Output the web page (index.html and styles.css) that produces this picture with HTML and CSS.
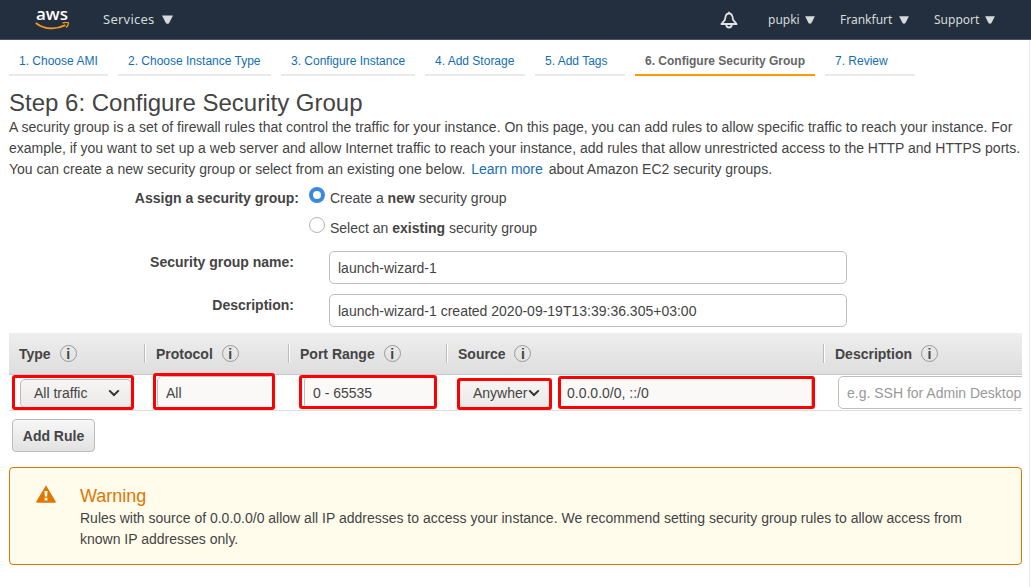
FILE: index.html
```html
<!DOCTYPE html>
<html lang="en">
<head>
<meta charset="utf-8">
<title>Configure Security Group</title>
<link rel="stylesheet" href="styles.css">
</head>
<body>
<header class="topbar">
  <a class="logo"><span class="logo-text">aws</span>
    <svg class="smile" width="35" height="8" viewBox="0 0 35 8"><path d="M0.8 .9C9 7.3 20 8 30.5 3.1" fill="none" stroke="#f7981f" stroke-width="1.9"/><path d="M27.6 1.1C30 .3 33.2 0 33.3 .7S32.8 4 31.2 5.6" fill="none" stroke="#f7981f" stroke-width="1.4"/></svg>
  </a>
  <a class="nav services">Services<svg class="caret" width="11" height="9" viewBox="0 0 11 9"><path d="M0 0.4H11L7 8.2Q5.5 9.2 4 8.2Z"/></svg></a>
  <svg class="bell" width="18" height="18" viewBox="0 0 18 18" fill="none" stroke="#e1e4e5" stroke-width="1.8" stroke-linejoin="round"><path d="M9 .8V2.3M1.4 13L4.9 8.9L5.6 5.4Q6.3 2.5 9 2.3Q11.7 2.5 12.4 5.4L13.1 8.9L16.6 13Z"/><path d="M6.2 13.4Q6.4 16.5 9 16.5T11.8 13.4"/></svg>
  <a class="nav user">pupki<svg class="caret" width="10" height="8" viewBox="0 0 11 9"><path d="M0 0.4H11L7 8.2Q5.5 9.2 4 8.2Z"/></svg></a>
  <a class="nav region">Frankfurt<svg class="caret" width="10" height="8" viewBox="0 0 11 9"><path d="M0 0.4H11L7 8.2Q5.5 9.2 4 8.2Z"/></svg></a>
  <a class="nav support">Support<svg class="caret" width="10" height="8" viewBox="0 0 11 9"><path d="M0 0.4H11L7 8.2Q5.5 9.2 4 8.2Z"/></svg></a>
</header>
<main class="page">
  <nav class="steps">
    <a class="step s1">1. Choose AMI</a><a class="step s2">2. Choose Instance Type</a><a class="step s3">3. Configure Instance</a><a class="step s4">4. Add Storage</a><a class="step s5">5. Add Tags</a><a class="step s6 active">6. Configure Security Group</a><a class="step s7">7. Review</a>
  </nav>
  <h1 class="title">Step 6: Configure Security Group</h1>
  <p class="intro">A security group is a set of firewall rules that control the traffic for your instance. On this page, you can add rules to allow specific traffic to reach your instance. For<br>example, if you want to set up a web server and allow Internet traffic to reach your instance, add rules that allow unrestricted access to the HTTP and HTTPS ports.<br>You can create a new security group or select from an existing one below. <a class="learn">Learn more</a> about Amazon EC2 security groups.</p>
  <section class="form">
    <div class="choice"><span class="choice-label">Assign a security group:</span><span class="radio checked"></span><span>Create a <b>new</b> security group</span></div>
    <div class="choice"><span class="choice-label"></span><span class="radio"></span><span>Select an <b>existing</b> security group</span></div>
    <div class="field"><span class="field-label">Security group name:</span><div class="input wide">launch-wizard-1</div></div>
    <div class="field"><span class="field-label">Description:</span><div class="input wide">launch-wizard-1 created 2020-09-19T13:39:36.305+03:00</div></div>
  </section>
  <section class="rules">
    <div class="cols head">
      <div class="th">Type<span class="info">i</span></div><div class="th">Protocol<span class="info">i</span></div><div class="th">Port Range<span class="info">i</span></div><div class="th">Source<span class="info">i</span></div><div class="th">Description<span class="info">i</span></div>
    </div>
    <div class="cols row">
      <div class="cell type"><div class="select">All traffic<svg class="chev" width="12" height="8" viewBox="0 0 12 8"><path d="M1.2 1.4L6 6L10.8 1.4"/></svg></div><i class="mark mark-type"></i></div>
      <div class="cell proto"><div class="input off">All</div><i class="mark mark-proto"></i></div>
      <div class="cell port"><div class="input off">0 - 65535</div><i class="mark mark-port"></i></div>
      <div class="cell source"><div class="select">Anywher<svg class="chev" width="12" height="8" viewBox="0 0 12 8"><path d="M1.2 1.4L6 6L10.8 1.4"/></svg></div><div class="input off">0.0.0.0/0, ::/0</div><i class="mark mark-any"></i><i class="mark mark-cidr"></i></div>
      <div class="cell desc"><div class="input hint">e.g. SSH for Admin Desktop</div></div>
    </div>
  </section>
  <button class="add">Add Rule</button>
  <section class="warning">
    <svg class="alert" width="20" height="18" viewBox="0 0 20 18"><path d="M10 .3L19.7 16.5Q20 17.8 18.8 17.8H1.2Q0 17.8.3 16.5Z" fill="#df7600"/><path d="M8.4 6H11.6L11.1 11.5H8.9ZM8.6 12.8H11.4V15.4H8.6Z" fill="#fffcec"/></svg>
    <div><h2 class="warning-title">Warning</h2><p class="warning-text">Rules with source of 0.0.0.0/0 allow all IP addresses to access your instance. We recommend setting security group rules to allow access from<br>known IP addresses only.</p></div>
  </section>
</main>
</body>
</html>
```
FILE: styles.css
```css
* { box-sizing: border-box; }
body { margin: 0; width: 1031px; height: 587px; overflow: hidden; background: #fff; color: #444; font: 14px/21px "Liberation Sans", Arial, sans-serif; }
.topbar { display: flex; align-items: center; height: 40px; background: #232f3e; border-bottom: 1px solid #4a5361; color: #d5dbdb; font-family: "Noto Sans", "Open Sans", sans-serif; }
.logo { display: flex; flex-direction: column; align-items: center; width: 35px; margin-left: 35px; padding-bottom: 4px; color: #fff; }
.logo-text { height: 15px; line-height: 15px; padding-right: 1px; font-family: "Open Sans", sans-serif; font-size: 17px; font-weight: 600; }
.smile { display: block; margin-top: 1px; }
.nav { display: flex; align-items: center; justify-content: space-between; font-size: 12px; white-space: nowrap; }
.caret { fill: #d5dbdb; }
.services { width: 70px; margin-left: 33px; font-size: 13px; letter-spacing: .25px; }
.services .caret { margin-bottom: 1px; }
.bell { margin-left: 547px; }
.user { width: 47px; margin-left: 30px; }
.region { width: 69px; margin-left: 25px; }
.support { width: 61px; margin-left: 25px; }
.page { width: 1030px; height: 547px; padding: 7px 8px 0 9px; border-right: 1px solid #e8e8e8; }
.steps { display: flex; gap: 10px; height: 29px; font-size: 12px; line-height: 28px; white-space: nowrap; }
.step { padding-left: 10px; border-bottom: 2px solid #eaeaea; color: #146eb4; }
.active { border-color: #ff9900; color: #666; font-weight: bold; }
.s1 { width: 99px; }
.s2 { width: 153px; }
.s3 { width: 134px; }
.s4 { width: 100px; }
.s5 { width: 90px; }
.s6 { width: 180px; }
.s7 { width: 90px; }
.title { margin: 13px 0 0; font-size: 24px; line-height: 28px; font-weight: normal; }
.intro { margin: 0; white-space: nowrap; }
.learn { margin: 0 2px; color: #146eb4; }
.form { padding-top: 8px; }
.choice { display: flex; height: 30px; }
.choice-label { width: 290px; margin-right: 10px; text-align: right; font-weight: bold; }
.radio { width: 16px; height: 16px; margin: -1px 5px 0 0; border: 1px solid #b8b5b2; border-radius: 50%; background: #fff; }
.checked { border: 4px solid #3b87e4; }
.field { display: flex; height: 43px; padding-top: 3px; }
.field-label { width: 285px; margin-right: 35px; padding-top: 1px; text-align: right; font-weight: bold; }
.input { height: 33px; padding: 0 8px; border: 1px solid #c1bdb9; border-radius: 5px; background: #fff; line-height: 32px; white-space: nowrap; overflow: hidden; }
.wide { width: 518px; }
.rules { width: 1013px; }
.cols { display: grid; grid-template-columns: 137px 144px 158px 377px 197px; }
.head { height: 42px; margin-top: -1px; align-items: center; border-bottom: 1px solid #c9c9c9; background: linear-gradient(#eee, #dedede); font-weight: bold; }
.th { display: flex; align-items: center; height: 19px; padding: 1px 0 0 10px; line-height: 19px; border-right: 1px solid #fff; box-shadow: inset -1px 0 #bbb; }
.th:last-child { border: 0; box-shadow: none; }
.info { width: 17px; height: 17px; margin: 0 0 2px 9px; border: 1px solid #999; border-radius: 50%; font-size: 14px; line-height: 16px; text-align: center; }
.row { height: 36px; border-bottom: 1px solid #ddd; }
.cell { position: relative; display: flex; min-width: 0; }
.select { display: flex; align-items: center; justify-content: space-between; height: 29px; margin-top: 4px; border: 1px solid #bdbab7; border-radius: 5px; background: linear-gradient(#f6f5f4, #ebeae8); line-height: 27px; }
.chev { margin-bottom: 1px; fill: none; stroke: #333; stroke-width: 2; }
.off { background: #faf9f8; }
.type .select { width: 112px; margin-left: 11px; padding: 0 11px 0 13px; }
.proto .input { width: 118px; margin: 1px 0 0 11px; }
.port .input { width: 132px; margin: 1px 0 0 14px; }
.source .select { width: 92px; margin-left: 11px; padding: 0 10px 0 13px; }
.source .input { width: 254px; margin: 1px 0 0 7px; }
.desc { overflow: hidden; }
.hint { width: 240px; flex: none; margin: 1px 0 0 13px; color: #999; }
.mark { position: absolute; border: 3px solid #f00; border-radius: 3px; }
.mark-type { left: 3px; top: 0; width: 122px; height: 35px; }
.mark-proto { left: 7px; top: -2px; width: 122px; height: 37px; }
.mark-port { left: 9px; top: 0; width: 138px; height: 34px; }
.mark-any { left: 9px; top: 3px; width: 95px; height: 32px; }
.mark-cidr { left: 110px; top: 1px; width: 257px; height: 33px; }
.add { display: block; width: 83px; height: 33px; margin: 8px 0 0 3px; padding: 0; border: 1px solid #bbb; border-radius: 4px; background: linear-gradient(#f7f7f7, #e2e2e2); color: #444; font: bold 14px "Liberation Sans", Arial, sans-serif; }
.warning { display: flex; width: 1013px; height: 98px; margin-top: 15px; padding: 17px 0 0 26px; border: 1px solid #df7600; border-radius: 4px; background: #fffcec; white-space: nowrap; }
.alert { margin-right: 24px; }
.warning-title { margin: 0 0 1px; color: #df7600; font-size: 18px; line-height: 22px; font-weight: normal; }
.warning-text { margin: 0; }
```
